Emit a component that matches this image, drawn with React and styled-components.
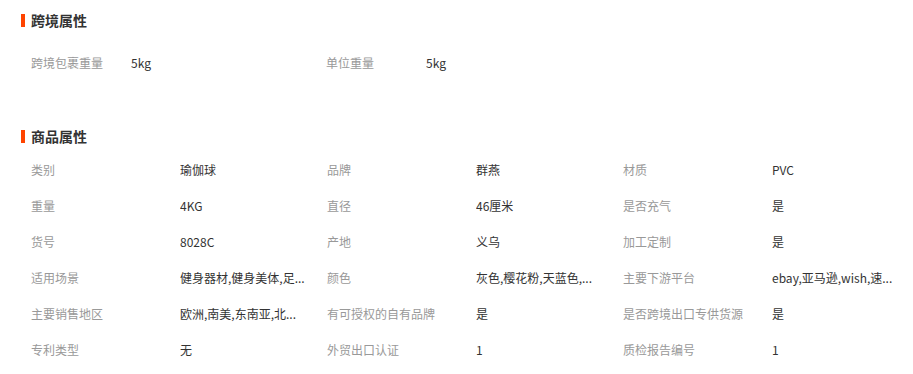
import React from 'react';
import styled, { createGlobalStyle } from 'styled-components';

const GlobalStyle = createGlobalStyle`
  body {
    margin: 0;
    background: #fff;
    font-family: "Noto Sans CJK SC", "Liberation Sans", sans-serif;
  }
`;

const Page = styled.div`
  width: 913px;
  padding-left: 21px;
  box-sizing: border-box;
`;

const Section = styled.section`
  padding-top: ${(p) => p.$top}px;
`;

const SectionTitle = styled.h3`
  display: flex;
  align-items: center;
  gap: 6px;
  margin: 0;
  height: 20px;
  font-size: 14px;
  font-weight: 700;
  color: #333;
  &::before {
    content: '';
    width: 4px;
    height: 13px;
    background: #ff4400;
  }
`;

const Grid = styled.div`
  display: grid;
  grid-template-columns: ${(p) => p.$cols};
  grid-auto-rows: ${(p) => p.$rowHeight}px;
  margin-top: ${(p) => p.$gap}px;
  padding-left: 10px;
`;

const Label = styled.div`
  font-size: 12px;
  line-height: ${(p) => p.$rowHeight}px;
  color: #999;
  white-space: nowrap;
`;

const Value = styled.div`
  font-size: 12px;
  line-height: ${(p) => p.$rowHeight}px;
  color: #333;
  max-width: 135px;
  white-space: nowrap;
  overflow: hidden;
  text-overflow: ellipsis;
`;

const crossBorder = [
  ['跨境包裹重量', '5kg'],
  ['单位重量', '5kg'],
];

const product = [
  ['类别', '瑜伽球'],
  ['品牌', '群燕'],
  ['材质', 'PVC'],
  ['重量', '4KG'],
  ['直径', '46厘米'],
  ['是否充气', '是'],
  ['货号', '8028C'],
  ['产地', '义乌'],
  ['加工定制', '是'],
  ['适用场景', '健身器材,健身美体,足...'],
  ['颜色', '灰色,樱花粉,天蓝色,...'],
  ['主要下游平台', 'ebay,亚马逊,wish,速...'],
  ['主要销售地区', '欧洲,南美,东南亚,北...'],
  ['有可授权的自有品牌', '是'],
  ['是否跨境出口专供货源', '是'],
  ['专利类型', '无'],
  ['外贸出口认证', '1'],
  ['质检报告编号', '1'],
];

const AttrGrid = ({ items, cols, rowHeight, gap }) => (
  <Grid $cols={cols} $rowHeight={rowHeight} $gap={gap}>
    {items.map(([label, value]) => (
      <React.Fragment key={label}>
        <Label $rowHeight={rowHeight}>{label}</Label>
        <Value $rowHeight={rowHeight}>{value}</Value>
      </React.Fragment>
    ))}
  </Grid>
);

export default function App() {
  return (
    <>
      <GlobalStyle />
      <Page>
        <Section $top={10}>
          <SectionTitle>跨境属性</SectionTitle>
          <AttrGrid items={crossBorder} cols="100px 195px 100px 195px" rowHeight={36} gap={15} />
        </Section>
        <Section $top={45}>
          <SectionTitle>商品属性</SectionTitle>
          <AttrGrid items={product} cols="149px 147px 149px 147px 149px 147px" rowHeight={36} gap={6} />
        </Section>
      </Page>
    </>
  );
}
